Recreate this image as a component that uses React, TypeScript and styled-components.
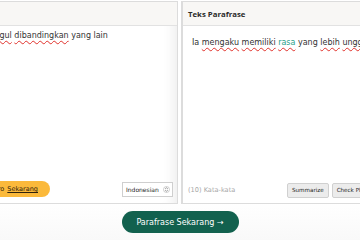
import React from "react";
import styled, { createGlobalStyle } from "styled-components";

const Global = createGlobalStyle`
  html, body { margin: 0; padding: 0; background: #ffffff; }
  body { font-family: "DejaVu Sans", "Noto Sans", sans-serif; width: 360px; height: 240px; overflow: hidden; }
  #root { width: 360px; height: 240px; overflow: hidden; }
`;

const Page = styled.div`
  width: 360px;
  height: 240px;
  overflow: hidden;
  background: linear-gradient(#ffffff 0, #ffffff 200px, #f9f9f9 240px);
  display: flex;
  flex-direction: column;
  align-items: center;
`;

const Row = styled.div`
  display: flex;
  gap: 3px;
  margin-top: 1px;
  width: 604px;
  flex: none;
`;

const Panel = styled.div<{ $left?: boolean }>`
  width: 300px;
  height: 203px;
  border: 1px solid #dcdcdc;
  border-width: ${(p) => (p.$left ? "1px 1px 1px 1px" : "1px 1px 1px 2px")};
  box-sizing: border-box;
  display: flex;
  flex-direction: column;
  background: #fff;
  box-shadow: ${(p) => (p.$left ? "inset -14px 0 12px -10px rgba(0,0,0,0.07)" : "none")};
`;

const Header = styled.div`
  height: 23px;
  flex: none;
  background: #f8f7f5;
  border-bottom: 1px solid #e2e2e2;
  display: flex;
  align-items: center;
  padding: 0 5px;
  font-family: "Open Sans", sans-serif;
  font-size: 7.8px;
  font-weight: 700;
  color: #2a2a2a;
`;

const Body = styled.div<{ $left?: boolean }>`
  flex: 1;
  padding: ${(p) => (p.$left ? "4px 11px 4px 15px" : "11px 9px")};
  font-size: 8px;
  color: #333;
  line-height: 12px;
  white-space: nowrap;
`;

const Wavy = styled.span`
  text-decoration: underline wavy #e0312b;
  text-decoration-thickness: 1px;
  text-underline-offset: 2px;
`;

const Accent = styled.span`
  color: #2aa18a;
  text-decoration: underline wavy #e0312b;
  text-decoration-thickness: 1px;
  text-underline-offset: 2px;
`;

const Footer = styled.div`
  height: 30px;
  flex: none;
  display: flex;
  align-items: center;
  padding: 2px 4px 0 5px;
  box-sizing: border-box;
`;

const Pill = styled.button`
  height: 16px;
  width: 110px;
  flex: none;
  border: none;
  border-radius: 8px;
  background: #fbb93b;
  color: #2e220c;
  font-family: inherit;
  font-size: 6.5px;
  padding: 0 12px 0 0;
  display: flex;
  align-items: center;
  justify-content: flex-end;
  gap: 3px;
  margin-left: 56px;
  white-space: nowrap;
`;

const Under = styled.span`
  text-decoration: underline;
`;

const Select = styled.div`
  margin-left: auto;
  flex: none;
  height: 15px;
  width: 51px;
  box-sizing: border-box;
  border: 1px solid #cfcfcf;
  background: #fff;
  display: flex;
  align-items: center;
  justify-content: space-between;
  padding: 0 2px 0 3px;
  font-size: 6px;
  color: #222;
`;

const Count = styled.span`
  width: 99px;
  flex: none;
  font-size: 6.6px;
  color: #a8a8a8;
  margin-top: 2px;
`;

const Buttons = styled.div`
  display: flex;
  gap: 3px;
  margin-top: 2px;
`;

const Btn = styled.button`
  height: 15px;
  border: 1px solid #d0d0d0;
  border-radius: 2px;
  background: #ececec;
  font-family: inherit;
  font-size: 5.6px;
  color: #222;
  padding: 0 4px;
  white-space: nowrap;
`;

const Main = styled.button`
  margin-top: 7px;
  width: 117px;
  height: 22px;
  border: none;
  border-radius: 11px;
  background: #12614e;
  color: #fff;
  font-family: inherit;
  font-size: 8px;
  display: flex;
  align-items: center;
  justify-content: center;
  flex: none;
  white-space: nowrap;
`;

const UpDown = () => (
  <svg width="7" height="7" viewBox="0 0 10 10">
    <circle cx="5" cy="5" r="4.3" fill="none" stroke="#aaa" strokeWidth="0.8" />
    <path d="M3 4.2 L5 2.5 L7 4.2 M3 5.8 L5 7.5 L7 5.8" fill="none" stroke="#666" strokeWidth="0.9" />
  </svg>
);

export default function App() {
  return (
    <>
      <Global />
      <Page>
        <Row>
          <Panel $left>
            <Header>Teks Asli</Header>
            <Body $left>
              Dia merasa jauh lebih un<Wavy>ggul</Wavy> <Wavy>dibandingkan</Wavy> yang lain
            </Body>
            <Footer>
              <Pill>
                Coba Pro <Under>Sekarang</Under>
              </Pill>
              <Select>
                Indonesian
                <UpDown />
              </Select>
            </Footer>
          </Panel>
          <Panel>
            <Header>Teks Parafrase</Header>
            <Body>
              Ia <Wavy>mengaku</Wavy> <Wavy>memiliki</Wavy> <Accent>rasa</Accent> yang <Wavy>lebih</Wavy>{" "}
              <Wavy>unggul</Wavy> dibandingkan yang lain
            </Body>
            <Footer>
              <Count>(10) Kata-kata</Count>
              <Buttons>
                <Btn>Summarize</Btn>
                <Btn>Check Plagiarism</Btn>
              </Buttons>
            </Footer>
          </Panel>
        </Row>
        <Main>Parafrase Sekarang →</Main>
      </Page>
    </>
  );
}
